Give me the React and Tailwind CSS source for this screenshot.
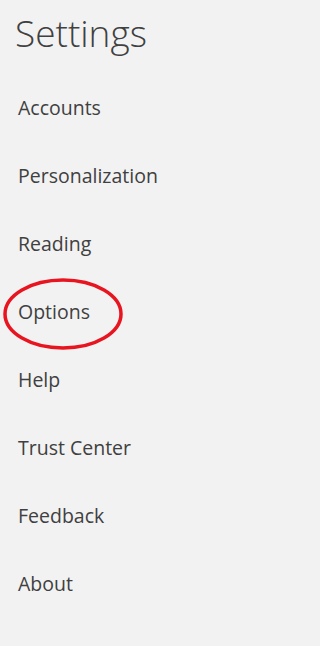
const items = ["Accounts", "Personalization", "Reading", "Options", "Help", "Trust Center", "Feedback", "About"];

export default function App() {
  return (
    <div className="min-h-screen w-full bg-[#f2f2f2] text-[#404040]" style={{ fontFamily: '"Open Sans", "Noto Sans", sans-serif' }}>
      <h1 className="pl-[15px] pt-[8px] text-[37px] font-light leading-[50px]">Settings</h1>
      <ul className="mt-[36px] flex flex-col">
        {items.map((item) => (
          <li key={item} className="relative h-[68px] pl-[18px] text-[19.5px] leading-[28px]">
            {item}
            {item === "Options" && (
              <svg className="absolute left-[2px] top-[-21px]" width="122" height="74" viewBox="0 0 122 74">
                <ellipse cx="61" cy="37" rx="58" ry="34" fill="none" stroke="#e8141f" strokeWidth="3.5" />
              </svg>
            )}
          </li>
        ))}
      </ul>
    </div>
  );
}
